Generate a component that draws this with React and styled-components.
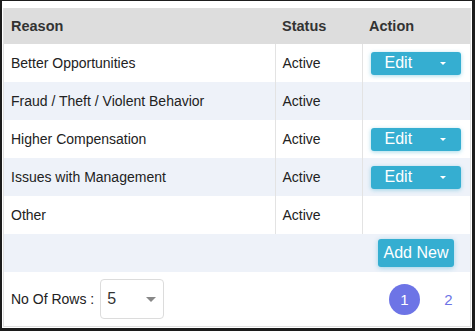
import React from "react";
import styled, { createGlobalStyle } from "styled-components";

const GlobalStyle = createGlobalStyle`
  body {
    margin: 0;
    font-family: "Liberation Sans", Arial, sans-serif;
    color: #222;
  }
`;

const rows = [
  { reason: "Better Opportunities", status: "Active", editable: true },
  { reason: "Fraud / Theft / Violent Behavior", status: "Active", editable: false },
  { reason: "Higher Compensation", status: "Active", editable: true },
  { reason: "Issues with Management", status: "Active", editable: true },
  { reason: "Other", status: "Active", editable: false },
];

function App() {
  return (
    <>
      <GlobalStyle />
      <Frame>
        <Panel>
          <Table>
            <colgroup>
              <col style={{ width: 271 }} />
              <col style={{ width: 87 }} />
              <col style={{ width: 108 }} />
            </colgroup>
            <thead>
              <tr>
                <Th>Reason</Th>
                <Th>Status</Th>
                <Th>Action</Th>
              </tr>
            </thead>
            <tbody>
              {rows.map((row, index) => (
                <Row key={row.reason} $striped={index % 2 === 1}>
                  <Td>{row.reason}</Td>
                  <Td>{row.status}</Td>
                  <Td $last>
                    {row.editable && (
                      <EditButton>
                        <span>Edit</span>
                        <Caret $color="#fff" $size={3} />
                      </EditButton>
                    )}
                  </Td>
                </Row>
              ))}
              <Row $striped>
                <AddCell colSpan={3}>
                  <AddButton>Add New</AddButton>
                </AddCell>
              </Row>
            </tbody>
          </Table>
          <Footer>
            <RowsPicker>
              <span>No Of Rows :</span>
              <Select>
                <span>5</span>
                <Caret $color="#888" $size={5} />
              </Select>
            </RowsPicker>
            <Pager>
              <PageLink $active>1</PageLink>
              <PageLink>2</PageLink>
            </Pager>
          </Footer>
        </Panel>
      </Frame>
    </>
  );
}

const Frame = styled.div`
  box-sizing: border-box;
  width: 475px;
  height: 331px;
  border: solid #1c1c1c;
  border-width: 1px 3px 3px 2px;
  padding: 7px 1px 1px 1px;
  background: #fff;
`;

const Panel = styled.div`
  box-sizing: border-box;
  height: 100%;
  border: 1px solid #e0e0e0;
  border-top: none;
  display: flex;
  flex-direction: column;
`;

const Table = styled.table`
  width: 100%;
  border-collapse: collapse;
  table-layout: fixed;
  font-size: 14px;
`;

const Th = styled.th`
  height: 36px;
  padding: 0 7px;
  background: #dddddd;
  color: #333;
  font-weight: bold;
  text-align: left;
  font-size: 14.5px;
`;

const Row = styled.tr`
  background: ${(p) => (p.$striped ? "#eef2f9" : "#fff")};
`;

const Td = styled.td`
  height: 38px;
  box-sizing: border-box;
  padding: 0 7px 0 ${(p) => (p.$last ? "8px" : "7px")};
  border-right: ${(p) => (p.$last ? "none" : "1px solid #e3e3e3")};
  color: #222;
  vertical-align: middle;
  white-space: nowrap;
`;

const AddCell = styled.td`
  height: 38px;
  padding: 0 16px 0 0;
  text-align: right;
  vertical-align: middle;
`;

const EditButton = styled.button`
  display: flex;
  align-items: center;
  justify-content: space-between;
  box-sizing: border-box;
  width: 90px;
  height: 23px;
  padding: 0 15px 0 14px;
  border: none;
  border-radius: 3px;
  background: #35aed1;
  color: #fff;
  font-family: inherit;
  font-size: 16px;
  box-shadow: 0 1px 4px rgba(53, 174, 209, 0.45);
`;

const Caret = styled.span`
  display: inline-block;
  width: 0;
  height: 0;
  border-left: ${(p) => p.$size}px solid transparent;
  border-right: ${(p) => p.$size}px solid transparent;
  border-top: ${(p) => p.$size}px solid ${(p) => p.$color};
`;

const AddButton = styled.button`
  box-sizing: border-box;
  width: 76px;
  height: 28px;
  padding: 0;
  border: none;
  border-radius: 3px;
  background: #35aed1;
  color: #fff;
  font-family: inherit;
  font-size: 16px;
  box-shadow: 0 1px 5px rgba(53, 174, 209, 0.45);
`;

const Footer = styled.div`
  flex: 1;
  display: flex;
  align-items: center;
  justify-content: space-between;
  padding: 0 6px 0 7px;
`;

const RowsPicker = styled.div`
  display: flex;
  align-items: center;
  gap: 6px;
  font-size: 14px;
  color: #222;
`;

const Select = styled.div`
  box-sizing: border-box;
  display: flex;
  align-items: center;
  justify-content: space-between;
  width: 64px;
  height: 40px;
  padding: 0 7px 0 6px;
  border: 1px solid #dcdcdc;
  border-radius: 4px;
  font-size: 16px;
  color: #333;
`;

const Pager = styled.div`
  display: flex;
  align-items: center;
  gap: 13px;
`;

const PageLink = styled.span`
  display: flex;
  align-items: center;
  justify-content: center;
  width: 31px;
  height: 31px;
  border-radius: 50%;
  background: ${(p) => (p.$active ? "#6d74e6" : "transparent")};
  color: ${(p) => (p.$active ? "#fff" : "#6d74e6")};
  font-size: 15px;
`;

export default App;
